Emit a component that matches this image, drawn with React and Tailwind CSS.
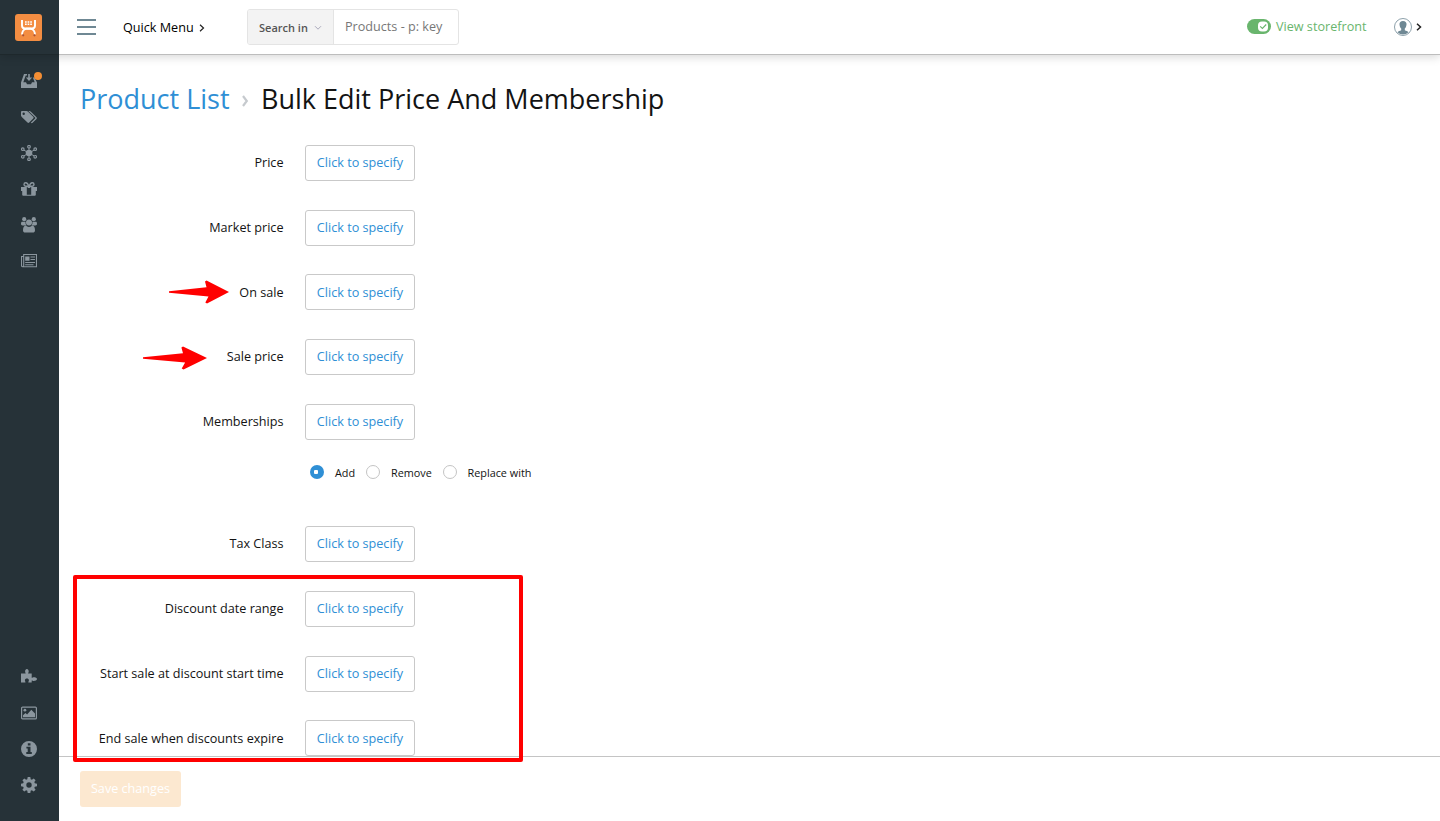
import React from "react";

const Svg = ({ children, className = "" }) => (
  <svg viewBox="0 0 16 16" className={`h-4 w-4 fill-current ${className}`}>
    {children}
  </svg>
);

const Inbox = () => (
  <Svg>
    <path d="M3 1h3v1.400H4.700L2.300 9.200H5l1 2h4l1-2h2.700L11.800 4.500h1.600L16 9.600V15H0V9.600z" />
    <path d="M7.200 1h1.600v3.500h2.400L8 8 4.800 4.500h2.400z" />
  </Svg>
);
const Tags = () => (
  <Svg>
    <path
      fillRule="evenodd"
      d="M0 3.200C0 2.400.5 2 1.200 2h4.200c.6 0 1.300.3 1.700.7l5.100 5.100c.6.6.6 1.200 0 1.700l-4 4c-.5.5-1.100.5-1.700 0L1 8.200C.4 7.700 0 7 0 6.500zM2.700 3.500a1.200 1.200 0 1 0 0 2.400 1.200 1.200 0 0 0 0-2.400z"
    />
    <path d="M7.400 2h.8c.6 0 1.300.3 1.700.7l5.600 5.600c.5.5.5 1.100 0 1.600L11.600 13.800c-.5.5-1.200.5-1.800-.1l4.300-4.300c.4-.4.4-.6 0-1z" />
  </Svg>
);
const Hub = () => (
  <Svg>
    <circle cx="8" cy="8" r="3.300" />
    <path d="M8 2.500v11M2.700 5l10.600 6M13.300 5L2.700 11" stroke="currentColor" strokeWidth="1" />
    <g className="fill-[#263238]" stroke="currentColor" strokeWidth="1.200">
      <circle cx="8" cy="1.700" r="1.300" />
      <circle cx="8" cy="14.300" r="1.300" />
      <circle cx="1.800" cy="4.200" r="1.300" />
      <circle cx="14.200" cy="4.200" r="1.300" />
      <circle cx="1.800" cy="11.800" r="1.300" />
      <circle cx="14.200" cy="11.800" r="1.300" />
    </g>
  </Svg>
);
const Gift = () => (
  <Svg>
    <path d="M0 6h5.800v8.700H2.200c-.6 0-1-.3-1-.9V10H0zM10.200 6H16v4h-1.200v3.800c0 .6-.4.900-1 .9h-3.600zM6.700 6h2.600v1H6.700zM5.500 13.700h5v1h-5z" />
    <path
      d="M7.700 5.300C7 2.700 6 1.700 4.800 1.700c-2.400 0-2.400 3.500 0 3.600zM8.300 5.300C9 2.700 10 1.700 11.200 1.700c2.400 0 2.400 3.500 0 3.600z"
      fill="none"
      stroke="currentColor"
      strokeWidth="1.400"
    />
  </Svg>
);
const Users = () => (
  <Svg>
    <circle cx="3.200" cy="2.200" r="2.100" />
    <circle cx="12.800" cy="2.200" r="2.100" />
    <path d="M.9 4.800h3c.3 0 .5.100.7.200-.2 1.400.2 2.500 1 3.400H1.700C.6 8.400 0 8 0 7.100 0 6 .2 4.800.9 4.800zM15.100 4.800h-3c-.3 0-.5.100-.7.200.2 1.400-.2 2.500-1 3.400h3.900c1.100 0 1.700-.4 1.700-1.300 0-1.100-.2-2.300-.9-2.300z" />
    <circle cx="8" cy="5.500" r="3" />
    <path d="M4.800 8.600c.8.900 1.800 1.300 3.200 1.300s2.400-.4 3.200-1.300c2 .2 2.800 2.400 2.800 4.600 0 1.500-.8 2.300-2.400 2.300H4.400C2.800 15.500 2 14.700 2 13.200c0-2.200.8-4.400 2.800-4.600z" />
  </Svg>
);
const News = () => (
  <Svg>
    <path
      d="M2.700 1.500h12.800v12.300H1.800c-.8 0-1.300-.5-1.300-1.300V3.500h2.200zM2.700 3.500v9c0 .8-.3 1.300-.9 1.300"
      fill="none"
      stroke="currentColor"
      strokeWidth="1.100"
    />
    <path d="M4.200 3.500h4.300v4.200H4.200zM9.500 3.500H14v1.100H9.500zM9.500 6H14v1.100H9.500zM4.200 9H14v1.100H4.200zM4.200 11.200h8.300v1.100H4.200z" />
  </Svg>
);
const Puzzle = () => (
  <Svg className="-mt-0.5">
    <path d="M0 5.500h4.600c.3-.6-.5-1-.5-2.100C4.100 2 4.800.9 5.900.9s1.800 1.100 1.800 2.500c0 1.100-.8 1.500-.5 2.100h3.500v4.300c.6.300 1-.5 2.100-.5 1.600 0 3.200.5 3.200 1.800s-1.600 1.900-3.200 1.900c-1.100 0-1.500-.8-2.100-.5v2.100H7.400c-.4-.5.5-1.500.5-2.400 0-1.100-.9-1.700-2-1.700s-2 .6-2 1.700c0 .9.900 1.900.5 2.400H0z" />
  </Svg>
);
const Picture = () => (
  <Svg>
    <rect x=".6" y="2.100" width="14.800" height="11.800" rx="1" fill="none" stroke="currentColor" strokeWidth="1.200" />
    <circle cx="3.900" cy="5.200" r="1.400" />
    <path d="M2 12.300v-2l2.500-2.400 1.600 1.500 4.200-4.700L14 8.400v3.900z" />
  </Svg>
);
const Info = () => (
  <Svg>
    <path
      fillRule="evenodd"
      d="M8 0a8 8 0 1 0 0 16A8 8 0 0 0 8 0zM6.800 2.200h2.700v2.200H6.800zM5.400 5.700h4.100v5.400h1.300V13H5.300v-1.900h1.400V7.600H5.400z"
    />
  </Svg>
);
const Cog = () => (
  <Svg>
    <path
      fillRule="evenodd"
      d="M6.700 0h2.600l.4 2.200 1.200.5 1.800-1.300 1.900 1.900-1.300 1.800.5 1.200 2.200.4v2.600l-2.200.4-.5 1.200 1.300 1.800-1.900 1.900-1.800-1.300-1.200.5L9.300 16H6.700l-.4-2.200-1.200-.5-1.800 1.300-1.900-1.900 1.300-1.800-.5-1.200L0 9.300V6.700l2.200-.4.5-1.200-1.300-1.800 1.900-1.900 1.800 1.300 1.200-.5zM8 5.300a2.700 2.700 0 1 0 0 5.400 2.700 2.700 0 0 0 0-5.400z"
    />
  </Svg>
);

const topIcons = [Inbox, Tags, Hub, Gift, Users, News];
const bottomIcons = [Puzzle, Picture, Info, Cog];

function NavItem({ Icon, badge }) {
  return (
    <a className="relative flex h-9 items-center justify-center pr-px">
      <Icon />
      {badge && <span className="absolute left-[34px] top-[9px] h-2 w-2 rounded-full bg-[#f38e34]" />}
    </a>
  );
}

function Arrow({ className }) {
  return (
    <svg viewBox="0 0 60 24" preserveAspectRatio="none" className={`absolute fill-[#ff0000] ${className}`}>
      <path d="M0 11.200L37.500 7.200 36 1.500 37.500.5 60 12 38 23.500 36.300 22.500 39.500 16.500 0 12.800z" />
    </svg>
  );
}

function Row({ label, children }) {
  return (
    <div className="relative flex h-[64.75px] items-start">
      <label className="flex h-9 w-[203.500px] items-center justify-end whitespace-nowrap text-[12.640px] leading-[19.500px]">
        {label}
      </label>
      <button className="ml-[21.500px] flex h-9 w-[110px] items-center justify-center whitespace-nowrap rounded-[3px] border border-[#c9c9c9] bg-white text-[12.640px] leading-[19.500px] text-[#2f8fd5]">
        Click to specify
      </button>
      {children}
    </div>
  );
}

function Radio({ label, checked, className = "" }) {
  return (
    <label className={`flex items-center whitespace-nowrap ${className}`}>
      {checked ? (
        <span className="flex h-[14px] w-[14px] items-center justify-center rounded-full bg-[#2f8fd5]">
          <span className="mr-0.5 h-1 w-1 rounded-[1px] bg-white" />
        </span>
      ) : (
        <span className="h-[14px] w-[14px] rounded-full border border-[#c4c4c4] bg-white" />
      )}
      <span className="ml-[11px] pt-0.5 text-[10.850px] leading-[14px]">{label}</span>
    </label>
  );
}

export default function App() {
  return (
    <div className="flex h-[821px] w-full flex-col overflow-hidden bg-white font-['Open_Sans',sans-serif] text-[#131313]">
      <header className="relative z-10 flex h-[55px] shrink-0 border-b border-[#bdbdbd] bg-white shadow-[0_2px_9px_rgba(0,0,0,0.16)]">
        <div className="-mb-px flex w-[59px] shrink-0 items-center justify-center border-b border-[#1e282c] bg-[#263238] pr-[2px]">
          <svg viewBox="0 0 27 27" className="h-[27px] w-[27px]">
            <rect width="27" height="27" rx="3" fill="#f38d42" />
            <path d="M7 6v5.500q0 3 3 3h7q3 0 3-3V6" fill="none" stroke="#fff" strokeWidth="1.900" />
            <path d="M7 20.500q.2-4.700 4-5.700h5q3.800 1 4 5.700" fill="none" stroke="#fff" strokeWidth="1.900" />
            <path d="M10 8h7M10 10.300h7" stroke="#fff" strokeWidth="1.500" strokeDasharray="1.700 .9" />
            <circle cx="8.200" cy="21.300" r="1.100" fill="#a74f37" />
            <circle cx="19.500" cy="21.300" r="1.100" fill="#a74f37" />
          </svg>
        </div>
        <div className="flex flex-1 items-center">
          <div className="ml-[18px] flex w-[19px] flex-col gap-[5.500px]">
            <span className="h-[1.500px] bg-[#6f8894]" />
            <span className="h-[1.500px] bg-[#6f8894]" />
            <span className="h-[1.500px] bg-[#6f8894]" />
          </div>
          <div className="ml-[27px] flex w-[124px] items-center whitespace-nowrap text-[12.640px] leading-[20px] text-black">
            Quick Menu
            <svg viewBox="0 0 6 8" className="ml-[5px] mt-0.5 h-2 w-1.5">
              <path d="M1 .8L4.500 4 1 7.200" fill="none" stroke="#222" strokeWidth="1.200" />
            </svg>
          </div>
          <div className="flex h-9 w-[212px] overflow-hidden rounded-[3px] border border-[#e4e4e4]">
            <div className="flex w-[86px] items-center border-r border-[#e4e4e4] bg-[#f3f3f3] pl-[11px] pt-0.5 text-[11px] font-semibold text-[#555]">
              <span className="w-[49px] whitespace-nowrap">Search in</span>
              <svg viewBox="0 0 8 6" className="ml-[6px] h-1.5 w-2">
                <path d="M1 1.200l3 3 3-3" fill="none" stroke="#aaa9bb" />
              </svg>
            </div>
            <div className="flex items-center whitespace-nowrap pb-px pl-[11px] text-[12.640px] leading-[19.500px] text-[#777]">
              Products - p: key
            </div>
          </div>
          <div className="ml-auto mr-[18px] flex items-center">
            <svg viewBox="0 0 24 15" className="-mt-px h-[15px] w-6">
              <rect width="24" height="15" rx="7.500" fill="#69b56d" />
              <rect x="11" y="2.500" width="10" height="10" rx="4" fill="#fff" />
              <path d="M13.200 7.300l2.200 2.200 3.800-4" fill="none" stroke="#69b56d" strokeWidth="1.100" />
            </svg>
            <span className="ml-[5px] w-[91px] whitespace-nowrap pb-px text-[12.640px] leading-[19.500px] text-[#69b56d]">
              View storefront
            </span>
            <svg viewBox="0 0 18 18" className="ml-[27px] h-[18px] w-[18px]">
              <circle cx="9" cy="9" r="8.500" fill="#fff" stroke="#6f8894" strokeWidth=".8" />
              <path d="M9 3c2.700 0 3.700 1.600 3.500 3.600-.2 2.300-1 3.400-1.700 4v1.600c1.300.8 2.700.8 3.700 2a7.900 7.900 0 0 1-11 0c1-1.200 2.400-1.200 3.700-2v-1.600c-.7-.6-1.500-1.700-1.700-4C5.300 4.600 6.300 3 9 3z" fill="#6f8894" />
            </svg>
            <svg viewBox="0 0 6 8" className="ml-[4px] h-2 w-1.5">
              <path d="M1 .8L4.500 4 1 7.200" fill="none" stroke="#222" strokeWidth="1.500" />
            </svg>
          </div>
        </div>
      </header>
      <div className="flex min-h-0 flex-1">
        <nav className="flex w-[59px] shrink-0 flex-col justify-between bg-[#263238] pb-[18px] pt-[8px] text-[#8b969e]">
          <div>
            {topIcons.map((I, i) => (
              <NavItem key={i} Icon={I} badge={i === 0} />
            ))}
          </div>
          <div>
            {bottomIcons.map((I, i) => (
              <NavItem key={i} Icon={I} />
            ))}
          </div>
        </nav>
        <main className="relative flex flex-1 flex-col">
          <div className="h-[701px] overflow-hidden pl-[21px]">
            <h1 className="flex h-[89.900px] items-start whitespace-nowrap pt-[24px] text-[27px] leading-[40px]">
              <a className="w-[150px] text-[#2f8fd5]">Product List</a>
              <svg viewBox="0 0 8 12" className="ml-[11px] mt-[16px] h-3 w-2">
                <path d="M2 1l3.800 5L2 11" fill="none" stroke="#c6cace" strokeWidth="2.200" />
              </svg>
              <span className="ml-[12px]">Bulk Edit Price And Membership</span>
            </h1>
            <Row label="Price" />
            <Row label="Market price" />
            <Row label="On sale">
              <Arrow className="left-[89px] top-[6px] h-6 w-[60px]" />
            </Row>
            <Row label="Sale price">
              <Arrow className="left-[63px] top-[6.500px] h-6 w-[64px]" />
            </Row>
            <Row label="Memberships" />
            <div className="-mt-[5px] flex h-[62.450px] items-start pl-[230px]">
              <Radio label="Add" checked className="w-[56px]" />
              <Radio label="Remove" className="w-[76.500px]" />
              <Radio label="Replace with" />
            </div>
            <Row label="Tax Class" />
            <Row label="Discount date range" />
            <Row label="Start sale at discount start time" />
            <Row label="End sale when discounts expire" />
          </div>
          <footer className="flex flex-1 items-start border-t border-[#c4c4c4] bg-white pl-[21px] pt-[14px]">
            <button className="flex h-9 w-[101px] items-center justify-center whitespace-nowrap rounded-[3px] bg-[#fce8d0] text-[12.640px] leading-[19.500px] text-white">
              Save changes
            </button>
          </footer>
          <div className="pointer-events-none absolute left-[14px] top-[520px] h-[187px] w-[450px] rounded-[2px] border-4 border-[#ff0000]" />
        </main>
      </div>
    </div>
  );
}
